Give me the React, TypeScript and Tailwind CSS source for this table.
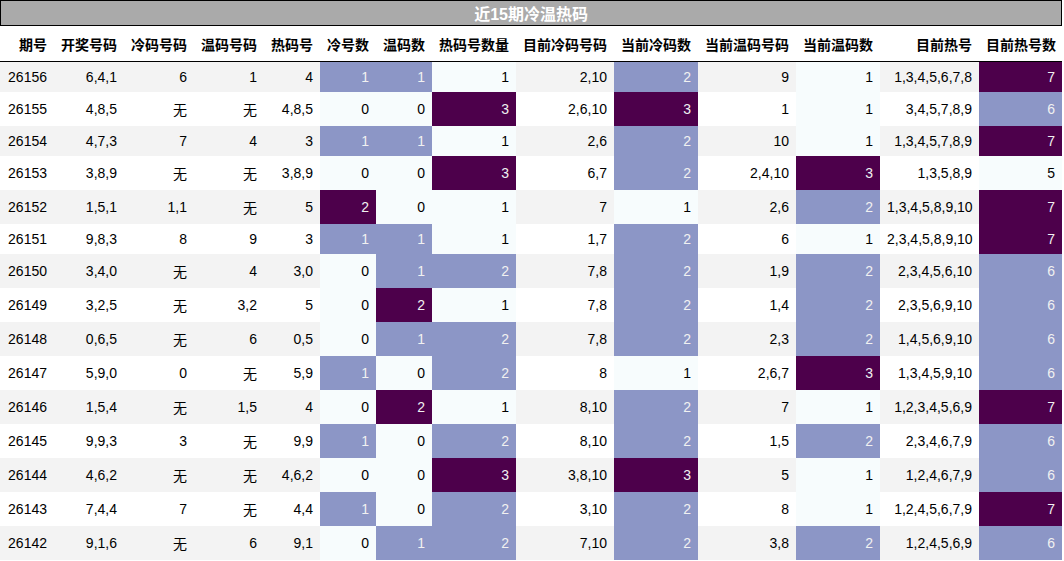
type Row = (string | number)[]

const columns = [
  '期号',
  '开奖号码',
  '冷码号码',
  '温码号码',
  '热码号',
  '冷号数',
  '温码数',
  '热码号数量',
  '目前冷码号码',
  '当前冷码数',
  '当前温码号码',
  '当前温码数',
  '目前热号',
  '目前热号数',
]

const widths = [
  'w-[54px]',
  'w-[70px]',
  'w-[70px]',
  'w-[70px]',
  'w-[56px]',
  'w-[56px]',
  'w-[56px]',
  'w-[84px]',
  'w-[98px]',
  'w-[84px]',
  'w-[98px]',
  'w-[84px]',
  'w-[99px]',
  'w-[83px]',
]

const rows: Row[] = [
  ['26156', '6,4,1', '6', '1', '4', 1, 1, 1, '2,10', 2, '9', 1, '1,3,4,5,6,7,8', 7],
  ['26155', '4,8,5', '无', '无', '4,8,5', 0, 0, 3, '2,6,10', 3, '1', 1, '3,4,5,7,8,9', 6],
  ['26154', '4,7,3', '7', '4', '3', 1, 1, 1, '2,6', 2, '10', 1, '1,3,4,5,7,8,9', 7],
  ['26153', '3,8,9', '无', '无', '3,8,9', 0, 0, 3, '6,7', 2, '2,4,10', 3, '1,3,5,8,9', 5],
  ['26152', '1,5,1', '1,1', '无', '5', 2, 0, 1, '7', 1, '2,6', 2, '1,3,4,5,8,9,10', 7],
  ['26151', '9,8,3', '8', '9', '3', 1, 1, 1, '1,7', 2, '6', 1, '2,3,4,5,8,9,10', 7],
  ['26150', '3,4,0', '无', '4', '3,0', 0, 1, 2, '7,8', 2, '1,9', 2, '2,3,4,5,6,10', 6],
  ['26149', '3,2,5', '无', '3,2', '5', 0, 2, 1, '7,8', 2, '1,4', 2, '2,3,5,6,9,10', 6],
  ['26148', '0,6,5', '无', '6', '0,5', 0, 1, 2, '7,8', 2, '2,3', 2, '1,4,5,6,9,10', 6],
  ['26147', '5,9,0', '0', '无', '5,9', 1, 0, 2, '8', 1, '2,6,7', 3, '1,3,4,5,9,10', 6],
  ['26146', '1,5,4', '无', '1,5', '4', 0, 2, 1, '8,10', 2, '7', 1, '1,2,3,4,5,6,9', 7],
  ['26145', '9,9,3', '3', '无', '9,9', 1, 0, 2, '8,10', 2, '1,5', 2, '2,3,4,6,7,9', 6],
  ['26144', '4,6,2', '无', '无', '4,6,2', 0, 0, 3, '3,8,10', 3, '5', 1, '1,2,4,6,7,9', 6],
  ['26143', '7,4,4', '7', '无', '4,4', 1, 0, 2, '3,10', 2, '8', 1, '1,2,4,5,6,7,9', 7],
  ['26142', '9,1,6', '无', '6', '9,1', 0, 1, 2, '7,10', 2, '3,8', 2, '1,2,4,5,6,9', 6],
]

// gradient columns: min -> light, middle -> blue, max -> purple
const shaded: Record<number, number> = { 5: 0, 6: 0, 7: 1, 9: 1, 11: 1, 13: 5 }

function shade(col: number, v: number) {
  const level = v - shaded[col]
  if (level <= 0) return 'bg-[#f7fcfd] text-black'
  if (level === 1) return 'bg-[#8c96c6] text-[#f1f1f1]'
  return 'bg-[#4d004b] text-[#f1f1f1]'
}

export default function App() {
  return (
    <div className="bg-white" style={{ fontFamily: '"Liberation Sans", "Noto Sans CJK SC", sans-serif' }}>
      <table className="table-fixed border-separate border-spacing-0 w-[1062px] text-[14px] leading-[normal] text-black">
        <colgroup>
          {widths.map((w, i) => (
            <col key={i} className={w} />
          ))}
        </colgroup>
        <thead>
          <tr>
            <th
              colSpan={14}
              className="h-[25px] p-0 border border-black bg-[#aaaaaa] text-white text-[16px] font-bold text-center"
            >
              近15期冷温热码
            </th>
          </tr>
          <tr>
            {columns.map((c) => (
              <th key={c} className="px-[7px] pt-[8px] pb-[7px] text-right font-bold border-b border-black whitespace-nowrap">
                {c}
              </th>
            ))}
          </tr>
        </thead>
        <tbody>
          {rows.map((r, ri) => (
            <tr key={ri} className={ri % 2 === 0 ? 'bg-[#f3f3f3]' : 'bg-white'}>
              {r.map((v, ci) => (
                <td
                  key={ci}
                  className={`px-[7px] py-[7px] text-right whitespace-nowrap ${
                    ci in shaded ? shade(ci, v as number) : ''
                  }`}
                >
                  {v}
                </td>
              ))}
            </tr>
          ))}
        </tbody>
      </table>
    </div>
  )
}
